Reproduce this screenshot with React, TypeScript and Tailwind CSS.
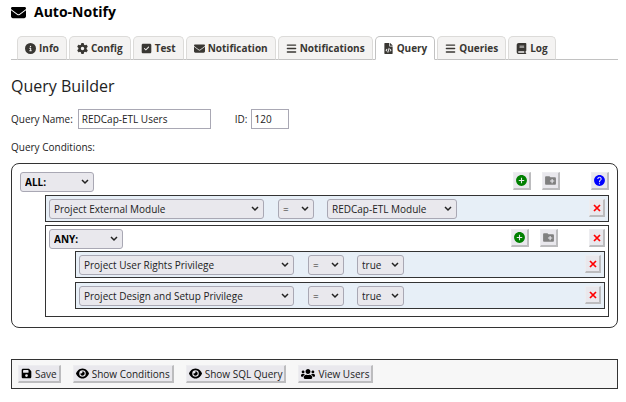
import React from "react";
import {
  FaBars,
  FaBook,
  FaCircleInfo,
  FaEnvelope,
  FaEye,
  FaFloppyDisk,
  FaGear,
  FaSquareCheck,
} from "react-icons/fa6";
import { FaFileCode, FaUsers } from "react-icons/fa";
import { MdAddCircle, MdCreateNewFolder, MdHelp } from "react-icons/md";

type Icon = React.ComponentType<{ className?: string }>;

const tabs: { label: string; icon: Icon; active?: boolean }[] = [
  { label: "Info", icon: FaCircleInfo },
  { label: "Config", icon: FaGear },
  { label: "Test", icon: FaSquareCheck },
  { label: "Notification", icon: FaEnvelope },
  { label: "Notifications", icon: FaBars },
  { label: "Query", icon: FaFileCode, active: true },
  { label: "Queries", icon: FaBars },
  { label: "Log", icon: FaBook },
];

const actions: { label: string; icon: Icon; size: string }[] = [
  { label: "Save", icon: FaFloppyDisk, size: "h-[11px] w-[11px]" },
  { label: "Show Conditions", icon: FaEye, size: "h-[13px] w-[13px]" },
  { label: "Show SQL Query", icon: FaEye, size: "h-[13px] w-[13px]" },
  { label: "View Users", icon: FaUsers, size: "h-[14px] w-[14px]" },
];

function Select({
  label,
  options,
  className,
}: {
  label: string;
  options: string[];
  className: string;
}) {
  return (
    <div className={`relative h-5 ${className}`}>
      <select
        aria-label={label}
        className="block h-full w-full appearance-none rounded-[3px] border border-[#a9a8b4] bg-[#e9e8ed] pl-1 leading-4"
      >
        {options.map((o) => (
          <option key={o}>{o}</option>
        ))}
      </select>
      <svg
        viewBox="0 0 8 6"
        className="pointer-events-none absolute top-[7px] right-[5px] h-[6px] w-2"
        fill="none"
        stroke="#222"
        strokeWidth="1.5"
      >
        <path d="M1 1l3 3 3-3" />
      </svg>
    </div>
  );
}

const raised =
  "border-t border-l border-r-2 border-b-2 border-t-[#ededf0] border-l-[#ededf0] border-r-[#bcbcbe] border-b-[#bcbcbe] bg-[#e9e8ed]";

function IconButton({ label, icon: I, color }: { label: string; icon: Icon; color: string }) {
  return (
    <button
      type="button"
      aria-label={label}
      className={`flex h-[18px] w-[18px] shrink-0 items-center justify-center ${raised} ${color}`}
    >
      <I className="h-[13px] w-[13px] shrink-0" />
    </button>
  );
}

function Remove() {
  return (
    <button
      type="button"
      aria-label="Remove"
      className={`flex h-[18px] w-4 shrink-0 items-center justify-center ${raised}`}
    >
      <svg viewBox="0 0 8 8" className="h-2 w-2" fill="none" stroke="#f00" strokeWidth="1.7">
        <path d="M1 1l6 6M7 1L1 7" />
      </svg>
    </button>
  );
}

function GroupHeader({ options, children }: { options: string[]; children: React.ReactNode }) {
  return (
    <div className="flex items-start">
      <Select label="Group operator" options={options} className="w-[74px] font-bold text-black" />
      <div className="ml-auto flex">
        <div className="mr-[31px] flex gap-[11px]">
          <IconButton label="Add condition" icon={MdAddCircle} color="text-[#008000]" />
          <IconButton label="Add group" icon={MdCreateNewFolder} color="text-[#808080]" />
        </div>
        {children}
      </div>
    </div>
  );
}

function Condition({ field, value, wide }: { field: string; value: string; wide?: boolean }) {
  return (
    <div className="flex h-[27px] items-start border border-[#333] bg-[#e7eff7] px-[3px] pt-[3px]">
      <Select label="Field" options={[field]} className="w-[215px]" />
      <Select label="Operator" options={["="]} className="ml-[14px] w-9" />
      <Select label="Value" options={[value]} className={`ml-[13px] ${wide ? "w-[130px]" : "w-[47px]"}`} />
      <div className="ml-auto">
        <Remove />
      </div>
    </div>
  );
}

export default function App() {
  return (
    <main className="bg-white pr-2 pl-[11px] font-['Open_Sans','Noto_Sans',sans-serif] text-[10px] leading-4 text-[#222]">
      <h1 className="flex items-center gap-2 pt-[2px] text-sm leading-5 font-bold text-black">
        <FaEnvelope className="h-[15px] w-[15px]" />
        Auto-Notify
      </h1>

      <nav className="mt-[14px] flex border-b border-[#c2c2c2] pl-[6px]">
        <ul className="-mb-px flex gap-[2px]">
          {tabs.map(({ label, icon: I, active }) => (
            <li key={label}>
              <a
                href="#"
                className={`flex h-6 items-center gap-[3px] rounded-t-[5px] border px-[7px] font-bold text-[#393733] ${
                  active
                    ? "border-[#c2c2c2] border-b-white bg-white"
                    : "border-[#dcdbd9] border-b-[#c2c2c2] bg-[#f4f3f2]"
                }`}
              >
                <I className="h-[11px] w-[11px]" />
                {label}
              </a>
            </li>
          ))}
        </ul>
      </nav>

      <h2 className="mt-[14px] text-base leading-6 text-[#222]">Query Builder</h2>

      <div className="mt-[11px] flex items-center">
        <label htmlFor="query-name">Query Name:</label>
        <input
          id="query-name"
          defaultValue="REDCap-ETL Users"
          className="ml-[5px] h-5 w-[133px] border border-[#a9a8b4] bg-white px-[3px]"
        />
        <label htmlFor="query-id" className="ml-6">
          ID:
        </label>
        <input
          id="query-id"
          defaultValue="120"
          className="ml-[3px] h-5 w-[38px] border border-[#a9a8b4] bg-white px-[3px]"
        />
      </div>

      <p className="mt-[10px]">Query Conditions:</p>

      <section className="mt-2 rounded-lg border border-[#333] px-2 pt-2 pb-[10px]">
        <GroupHeader options={["ALL:", "ANY:"]}>
          <IconButton label="Help" icon={MdHelp} color="text-[#00f]" />
        </GroupHeader>
        <div className="mt-[3px] ml-[25px] flex flex-col gap-[3px]">
          <Condition field="Project External Module" value="REDCap-ETL Module" wide />
          <div className="border border-[#333] px-[3px] pt-[3px] pb-[7px]">
            <GroupHeader options={["ANY:", "ALL:"]}>
              <Remove />
            </GroupHeader>
            <div className="mt-[2px] ml-[26px] flex flex-col gap-1">
              <Condition field="Project User Rights Privilege" value="true" />
              <Condition field="Project Design and Setup Privilege" value="true" />
            </div>
          </div>
        </div>
      </section>

      <footer className="mt-[31px] flex gap-3 border border-[#333] bg-[#f7f7f7] px-[6px] py-[5px]">
        {actions.map(({ label, icon: I, size }) => (
          <button key={label} type="button" className={`flex h-[18px] items-center gap-[3px] px-[2px] ${raised}`}>
            <I className={`text-black ${size}`} />
            {label}
          </button>
        ))}
      </footer>
    </main>
  );
}
